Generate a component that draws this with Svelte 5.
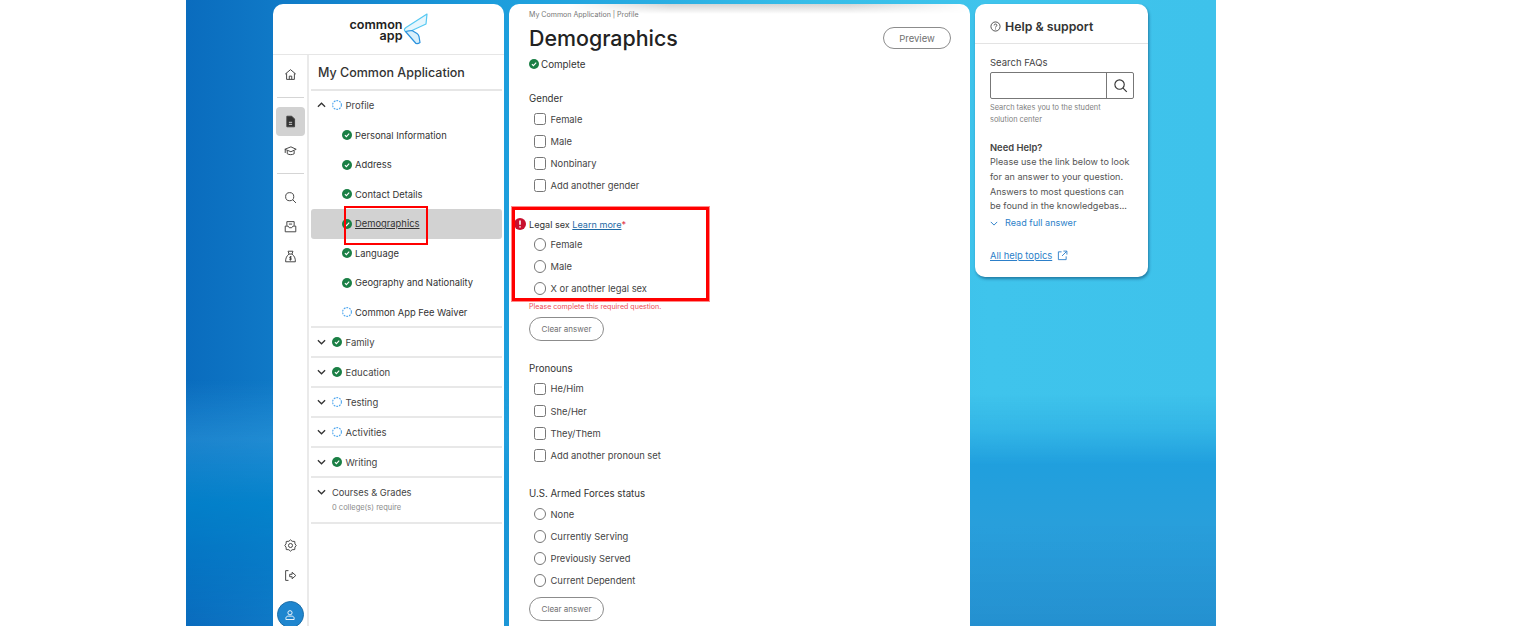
<script>
  const sections = [
    { label: 'Profile', status: 'todo', open: true },
    { label: 'Family', status: 'done' },
    { label: 'Education', status: 'done' },
    { label: 'Testing', status: 'todo' },
    { label: 'Activities', status: 'todo' },
    { label: 'Writing', status: 'done' }
  ];
  const profileItems = [
    { label: 'Personal Information', status: 'done' },
    { label: 'Address', status: 'done' },
    { label: 'Contact Details', status: 'done' },
    { label: 'Demographics', status: 'done', active: true },
    { label: 'Language', status: 'done' },
    { label: 'Geography and Nationality', status: 'done' },
    { label: 'Common App Fee Waiver', status: 'todo' }
  ];
  const gender = ['Female', 'Male', 'Nonbinary', 'Add another gender'];
  const legalSex = ['Female', 'Male', 'X or another legal sex'];
  const pronouns = ['He/Him', 'She/Her', 'They/Them', 'Add another pronoun set'];
  const forces = ['None', 'Currently Serving', 'Previously Served', 'Current Dependent'];
</script>

{#snippet status(kind)}
  {#if kind === 'done'}
    <svg class="status" viewBox="0 0 10 10">
      <circle cx="5" cy="5" r="5" fill="#1a7f45" />
      <path d="M2.9 5.1l1.5 1.500 2.800-3" fill="none" stroke="#fff" stroke-width="1.100" />
    </svg>
  {:else}
    <svg class="status" viewBox="0 0 10 10">
      <circle cx="5" cy="5" r="4.400" fill="none" stroke="#4ea6ee" stroke-width="1.100" stroke-dasharray="1.800 1" />
    </svg>
  {/if}
{/snippet}

{#snippet chevron(up)}
  <svg class="chev" viewBox="0 0 10 6">
    <path d={up ? 'M1 5l4-4 4 4' : 'M1 1l4 4 4-4'} fill="none" stroke="#333" stroke-width="1.400" />
  </svg>
{/snippet}

{#snippet options(items, kind)}
  <ul class="options">
    {#each items as item}
      <li><span class={kind}></span>{item}</li>
    {/each}
  </ul>
{/snippet}

<div class="stage">
  <section class="card nav-card">
    <header class="logo">
      <div class="wordmark">common<br /><span>app</span></div>
      <svg width="25" height="32" viewBox="0 0 25 32">
        <path d="M24 1L3 14.500Q0 17 2.500 18.500L9 17.500 23 11z" fill="#e6f6fd" stroke="#55c8f2" stroke-width="1.200" stroke-linejoin="round" />
        <path d="M2.500 18.500L13 30.500Q15 31 17 29.500L16 23.500Q15.500 21.500 14 20.500L9 17.500z" fill="#d8effb" stroke="#2a92de" stroke-width="1.200" stroke-linejoin="round" />
      </svg>
    </header>
    <div class="nav-body">
      <nav class="rail">
        <div class="rail-top">
          <button class="rail-btn" aria-label="Home">
            <svg viewBox="0 0 16 16"><path d="M1.500 7.500L8 2l6.500 5.500M3.200 6.500V14h9.600V6.500M6.500 14v-4h3v4" /></svg>
          </button>
          <hr />
          <button class="rail-btn on" aria-label="Application">
            <svg viewBox="0 0 16 16"><path class="solid" d="M3.500 1.500h6l3.500 3.500v9.500h-9.500z" /><path d="M6 9h4M6 11.500h4" style="stroke:#d2d2d2" /></svg>
          </button>
          <button class="rail-btn" aria-label="Colleges">
            <svg viewBox="0 0 16 16"><path d="M1 6.500L8.500 3.500 15 6.500 8.500 9.500zM4 8.500v3.500c2.500 1.500 6 1.500 8.500 0V8.500M1.500 7v4" /></svg>
          </button>
          <hr />
          <button class="rail-btn" aria-label="Search">
            <svg viewBox="0 0 16 16"><circle cx="7" cy="7" r="5" /><path d="M10.700 10.700l4 4" /></svg>
          </button>
          <button class="rail-btn" aria-label="Inbox">
            <svg viewBox="0 0 16 16"><path d="M3.500 7V2h9v5M1.500 7.500h3.500l1.500 2h3l1.500-2h3.500V14.500h-13zM6 5h4" /></svg>
          </button>
          <button class="rail-btn" aria-label="Financial aid">
            <svg viewBox="0 0 16 16"><path d="M5 1.500h6L9.800 5H6.200zM6.200 5C3.500 7 1.800 10 2 14.500h12C14.200 10 12.500 7 9.800 5M9.500 8.500H7.200v1.700h1.600v1.700H6.500M8 7.500v5.500" /></svg>
          </button>
        </div>
        <div class="rail-bottom">
          <button class="rail-btn" aria-label="Settings">
            <svg viewBox="0 0 16 16"><path d="M8 1l2 1.800 3.200.2.300 3L15 8l-1.500 2-.3 3-3.200.2L8 15l-2-1.800-3.200-.2-.3-3L1 8l1.500-2 .3-3L6 2.800z" stroke-linejoin="round" /><circle cx="8" cy="8" r="2.500" /></svg>
          </button>
          <button class="rail-btn" aria-label="Sign out">
            <svg viewBox="0 0 16 16"><path d="M5.500 2H2v12h3.500M7 6.500h3V4l4.500 4-4.500 4V9.500H7z" /></svg>
          </button>
          <div class="avatar">
            <svg viewBox="0 0 16 16"><circle cx="8" cy="5" r="2.800" /><path d="M2.500 14v-1.500c0-2 1.500-3 3-3h5c1.500 0 3 1 3 3V14z" /></svg>
          </div>
        </div>
      </nav>
      <div class="nav-panel">
        <h2>My Common Application</h2>
        {#each sections as section}
          <div class="section">
            <div class="section-head">
              {@render chevron(section.open)}
              {@render status(section.status)}
              <span>{section.label}</span>
            </div>
            {#if section.open}
              <ul class="sub">
                {#each profileItems as item}
                  <li class:active={item.active}>
                    {@render status(item.status)}
                    <span>{item.label}</span>
                  </li>
                {/each}
              </ul>
            {/if}
          </div>
        {/each}
        <div class="section courses">
          <div class="section-head">
            {@render chevron(false)}
            <span>Courses &amp; Grades</span>
          </div>
          <small>0 college(s) require</small>
        </div>
      </div>
    </div>
  </section>

  <main class="card form-card">
    <div class="crumb">My Common Application | Profile</div>
    <div class="title-row">
      <h1>Demographics</h1>
      <button class="pill preview">Preview</button>
    </div>
    <div class="complete">{@render status('done')}<span>Complete</span></div>

    <fieldset class="gender">
      <div class="q">Gender</div>
      {@render options(gender, 'check')}
    </fieldset>

    <fieldset class="legal">
      <div class="q">
        <svg class="err" viewBox="0 0 12 12"><circle cx="6" cy="6" r="6" fill="#c8102e" /><path d="M6 2.500v4.200M6 8.200v1.400" stroke="#fff" stroke-width="1.600" /></svg>
        Legal sex <a href="#top">Learn more</a><em>*</em>
      </div>
      {@render options(legalSex, 'radio')}
      <div class="error">Please complete this required question.</div>
      <button class="pill clear">Clear answer</button>
    </fieldset>

    <fieldset class="pronouns">
      <div class="q">Pronouns</div>
      {@render options(pronouns, 'check')}
    </fieldset>

    <fieldset class="forces">
      <div class="q">U.S. Armed Forces status</div>
      {@render options(forces, 'radio')}
      <button class="pill clear">Clear answer</button>
    </fieldset>
  </main>

  <aside class="card help-card">
    <header class="help-head">
      <svg viewBox="0 0 12 12"><circle cx="6" cy="6" r="5" /><path d="M4.500 4.800c0-2 3-2 3 -.1 0 1.200-1.500 1.100-1.500 2.400M6 8.200v1" /></svg>
      <h3>Help &amp; support</h3>
    </header>
    <div class="help-body">
      <label for="faq">Search FAQs</label>
      <div class="search">
        <input id="faq" />
        <button aria-label="Search">
          <svg viewBox="0 0 16 16"><circle cx="7" cy="7" r="5" /><path d="M10.700 10.700l4 4" /></svg>
        </button>
      </div>
      <p class="hint">Search takes you to the student solution center</p>
      <h4>Need Help?</h4>
      <p class="answer">Please use the link below to look for an answer to your question. Answers to most questions can be found in the knowledgebas...</p>
      <div class="read">
        <svg viewBox="0 0 10 6"><path d="M1 1l4 4 4-4" /></svg>
        Read full answer
      </div>
      <div class="topics">
        <a href="#top">All help topics</a>
        <svg viewBox="0 0 12 12"><path d="M5 2H1.500v8.500H10V7M7 1.200h3.800V5M10.500 1.500L5.500 6.500" /></svg>
      </div>
    </div>
  </aside>

  <div class="mark mark-nav"></div>
  <div class="mark mark-form"></div>
</div>

<style>
  :global(body) {
    margin: 0;
    background: #fff;
    overflow: hidden;
  }
  .stage {
    position: relative;
    box-sizing: border-box;
    width: 1030px;
    height: 626px;
    margin-left: 186px;
    padding: 4px 0 0 87px;
    display: flex;
    align-items: flex-start;
    gap: 5px;
    overflow: hidden;
    background: linear-gradient(90deg, #0a6cbe 0%, #0f78c6 8%, #1c9ddc 30%, #37bde8 60%, #3fc4ec 78%, #3ec2eb 100%);
    font-family: Inter, 'Noto Sans', sans-serif;
    color: #333;
  }
  /* lighter band low on the left, darker wave low on the right */
  .stage::before,
  .stage::after {
    content: '';
    position: absolute;
    left: 0;
    right: 0;
    bottom: 0;
  }
  .stage::before {
    top: 380px;
    background: linear-gradient(180deg, rgba(60, 170, 230, 0) 0%, rgba(60, 170, 230, 0.38) 24%, rgba(0, 135, 205, 0.7) 50%, rgba(0, 125, 200, 0.45) 75%, rgba(10, 108, 190, 0) 100%);
    -webkit-mask-image: linear-gradient(90deg, #000 0, #000 10%, transparent 45%);
    mask-image: linear-gradient(90deg, #000 0, #000 10%, transparent 45%);
  }
  .stage::after {
    top: 395px;
    background: linear-gradient(180deg, rgba(25, 150, 218, 0) 0%, rgba(25, 150, 218, 0.3) 15%, rgba(25, 150, 218, 0.8) 30%, rgba(35, 150, 215, 0.8) 55%, rgba(32, 135, 203, 0.85) 100%);
    -webkit-mask-image: linear-gradient(90deg, transparent 15%, #000 60%);
    mask-image: linear-gradient(90deg, transparent 15%, #000 60%);
  }
  .card {
    position: relative;
    z-index: 1;
    background: #fff;
    border-radius: 10px;
    box-sizing: border-box;
  }
  .nav-card {
    width: 231px;
    height: 640px;
  }
  .logo {
    height: 50px;
    display: flex;
    justify-content: center;
    align-items: center;
    border-bottom: 1px solid #e6e6e6;
    box-sizing: content-box;
  }
  .wordmark {
    font-size: 12.600px;
    font-weight: 600;
    line-height: 11px;
    color: #222;
    text-align: right;
    margin-top: 2px;
  }
  .nav-body {
    display: flex;
    height: 585px;
  }
  .rail {
    width: 34px;
    flex: none;
    border-right: 2px solid #eaeaea;
    display: flex;
    flex-direction: column;
    justify-content: space-between;
    align-items: center;
    padding-top: 5px;
  }
  .rail-top,
  .rail-bottom {
    display: flex;
    flex-direction: column;
    align-items: center;
  }
  .rail-top hr {
    width: 27px;
    margin: 7px 0 9px;
    border: 0;
    border-top: 1px solid #d5d5d5;
  }
  .rail-btn {
    width: 29px;
    height: 29.500px;
    padding: 0;
    display: flex;
    align-items: center;
    justify-content: center;
    border: 0;
    border-radius: 4px;
    background: none;
  }
  .rail-btn.on {
    background: #d2d2d2;
  }
  .rail-btn svg {
    width: 13px;
    height: 13px;
    fill: none;
    stroke: #444;
    stroke-width: 1.200;
  }
  .rail-btn svg .solid {
    fill: #333;
  }
  .rail-bottom {
    margin-bottom: 12px;
  }
  .avatar {
    width: 25px;
    height: 25px;
    margin-top: 11px;
    border-radius: 50%;
    background: #1f86cf;
    border: 1px solid #1c6ea8;
    display: flex;
    align-items: center;
    justify-content: center;
  }
  .avatar svg {
    width: 12px;
    height: 12px;
    fill: none;
    stroke: #fff;
    stroke-width: 1.200;
  }
  .nav-panel {
    flex: 1;
    padding: 0 2px;
    min-width: 0;
  }
  h2 {
    margin: 0;
    padding: 0 7px;
    height: 34px;
    line-height: 36px;
    font-size: 12.500px;
    font-weight: 500;
    color: #333;
    border-bottom: 2px solid #e6e6e6;
  }
  .section {
    border-bottom: 2px solid #e8e8e8;
  }
  .section-head {
    height: 28px;
    display: flex;
    align-items: center;
    padding-left: 6px;
    font-size: 9.500px;
    color: #444;
  }
  .chev {
    width: 9px;
    height: 6px;
    flex: none;
    margin-right: 6px;
  }
  .status {
    width: 10px;
    height: 10px;
    flex: none;
    margin-right: 3.500px;
  }
  .sub {
    list-style: none;
    margin: 0 0 -1px;
    padding: 1.500px 0 0;
  }
  .sub li {
    height: 29.500px;
    display: flex;
    align-items: center;
    padding-left: 30.500px;
    font-size: 9.400px;
    color: #333;
    border-radius: 3px;
  }
  .sub li.active {
    background: #d2d2d2;
  }
  .sub li.active span {
    text-decoration: underline;
  }
  .courses {
    height: 43.500px;
  }
  .courses .section-head {
    font-size: 9.300px;
    gap: 0;
  }
  .courses small {
    display: block;
    margin: -3px 0 0 21px;
    font-size: 7.500px;
    color: #8a8a8a;
  }
  .form-card {
    width: 461px;
    height: 640px;
    padding: 6px 19px 0 20px;
    flex: none;
    overflow: hidden;
  }
  .form-card::before {
    content: '';
    position: absolute;
    top: 0;
    left: 60px;
    right: 0;
    height: 10px;
    background: linear-gradient(180deg, #d4d4d4, #fff);
    -webkit-mask-image: linear-gradient(90deg, transparent, #000 25%, #000 70%, transparent);
    mask-image: linear-gradient(90deg, transparent, #000 25%, #000 70%, transparent);
  }
  .crumb {
    position: relative;
    font-size: 7.050px;
    color: #777;
    line-height: 10px;
  }
  .title-row {
    display: flex;
    justify-content: space-between;
    align-items: center;
    height: 36px;
  }
  h1 {
    margin: 0;
    font-size: 21.400px;
    font-weight: 500;
    color: #222;
  }
  .pill {
    font: inherit;
    background: #fff;
    border: 1.500px solid #8c8c8c;
    border-radius: 12px;
    color: #707070;
    padding: 0;
  }
  .preview {
    width: 68px;
    height: 22px;
    font-size: 9.500px;
  }
  .complete {
    display: flex;
    align-items: center;
    height: 14px;
    margin-top: 1px;
    font-size: 9.800px;
    color: #333;
  }
  .complete .status {
    margin-right: 2px;
  }
  fieldset {
    border: 0;
    margin: 20px 0 0;
    padding: 0;
  }
  fieldset.forces {
    margin-top: 19px;
  }
  .q {
    height: 14px;
    font-size: 9.700px;
    line-height: 16px;
    color: #333;
    position: relative;
  }
  .legal .q {
    font-size: 9.100px;
  }
  .options {
    list-style: none;
    margin: 3px 0 0;
    padding: 0 0 0 4.500px;
  }
  .legal .options {
    margin-top: 2.500px;
  }
  .forces .options {
    margin-top: 3.500px;
  }
  .options li {
    height: 22.200px;
    display: flex;
    align-items: center;
    font-size: 9.400px;
    color: #444;
  }
  .check,
  .radio {
    width: 10.500px;
    height: 10.500px;
    margin-right: 4.500px;
    border: 1.200px solid #777;
    box-sizing: content-box;
    flex: none;
  }
  .check {
    border-radius: 2.500px;
  }
  .radio {
    border-radius: 50%;
  }
  .err {
    position: absolute;
    left: -15px;
    top: 1px;
    width: 12px;
    height: 12px;
  }
  .q a {
    color: #1f6aa5;
  }
  .q em {
    color: #e0263c;
    font-style: normal;
  }
  .error {
    font-size: 7.100px;
    line-height: 10px;
    margin-top: 2px;
    color: #ee4b55;
  }
  .clear {
    display: block;
    width: 75px;
    height: 24px;
    font-size: 8px;
    margin-top: 5px;
  }
  .forces .clear {
    margin-top: 5.500px;
  }
  .help-card {
    width: 173px;
    height: 273px;
    box-shadow: 1px 2px 3px rgba(0, 40, 80, 0.45);
    flex: none;
  }
  .help-head {
    height: 40px;
    box-sizing: border-box;
    padding: 6px 0 0 15px;
    display: flex;
    align-items: center;
    gap: 4px;
    border-bottom: 1px solid #e3e3e3;
  }
  .help-head svg {
    width: 11px;
    height: 11px;
    fill: none;
    stroke: #333;
    stroke-width: 0.900;
  }
  h3 {
    margin: 0;
    font-size: 12.300px;
    font-weight: 600;
    color: #333;
  }
  .help-body {
    padding: 12px 12px 0 15px;
  }
  label {
    display: block;
    font-size: 9.500px;
    line-height: 14px;
    color: #444;
  }
  .search {
    display: flex;
    width: 144px;
    height: 27px;
    box-sizing: border-box;
    margin-top: 2px;
    border: 1px solid #777;
    border-radius: 2px;
  }
  .search input {
    flex: 1;
    min-width: 0;
    border: 0;
    padding: 0;
    background: none;
  }
  .search button {
    width: 27px;
    padding: 0;
    background: none;
    border: 0;
    border-left: 1px solid #777;
    display: flex;
    align-items: center;
    justify-content: center;
  }
  .search svg {
    width: 15px;
    height: 15px;
    fill: none;
    stroke: #333;
    stroke-width: 1.200;
  }
  .hint {
    width: 125px;
    margin: 3px 0 0;
    font-size: 7.400px;
    line-height: 12px;
    color: #808080;
  }
  h4 {
    margin: 14px 0 0;
    font-size: 9.400px;
    line-height: 15px;
    font-weight: 600;
    color: #444;
  }
  .answer {
    margin: 0;
    font-size: 9.050px;
    line-height: 14.800px;
    color: #555;
  }
  .read {
    margin-top: 2px;
    display: flex;
    align-items: center;
    font-size: 9.100px;
    line-height: 14px;
    color: #2c7fc9;
  }
  .read svg {
    width: 8px;
    height: 5px;
    margin-right: 7px;
    fill: none;
    stroke: #2c7fc9;
    stroke-width: 1.200;
  }
  .topics {
    margin-top: 20px;
    display: flex;
    align-items: center;
    gap: 5px;
    font-size: 9.400px;
  }
  .topics a {
    color: #2c7fc9;
  }
  .topics svg {
    width: 11px;
    height: 11px;
    fill: none;
    stroke: #2c7fc9;
    stroke-width: 1;
  }
  .mark {
    position: absolute;
    z-index: 2;
    box-sizing: border-box;
    border-style: solid;
    border-color: #f00;
  }
  .mark-nav {
    left: 158px;
    top: 206px;
    width: 84px;
    height: 39px;
    border-width: 2px;
  }
  .mark-form {
    left: 326px;
    top: 207px;
    width: 197px;
    height: 94px;
    border-width: 3.500px;
    outline: 1.500px solid #ff8a8a;
  }
</style>
